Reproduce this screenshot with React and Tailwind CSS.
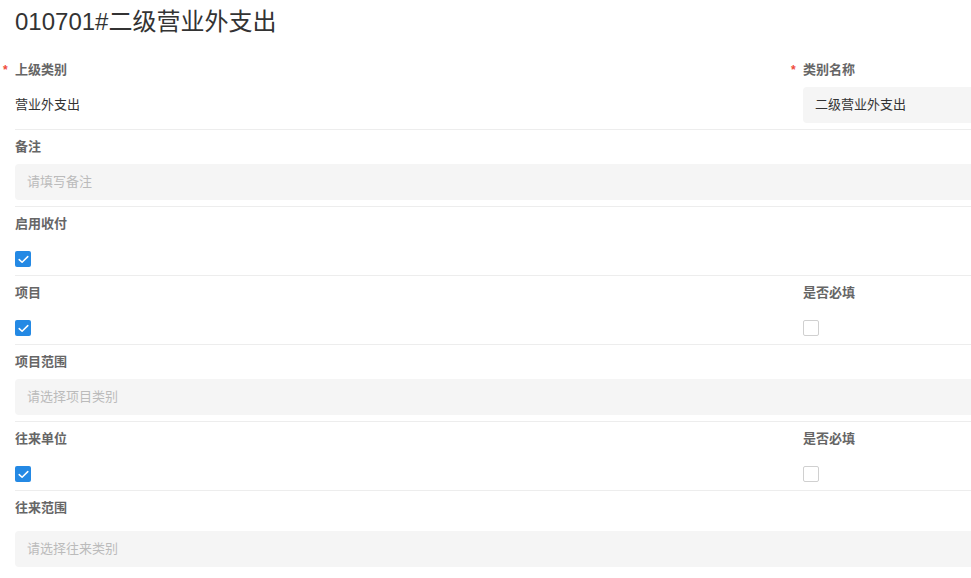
import React from 'react';

const font = { fontFamily: '"Liberation Sans", "Noto Sans CJK SC", sans-serif' };

const Label = ({ children, required }) => (
  <div className="relative h-5 mt-[7px] text-[13px] leading-5 font-bold text-[#666]">
    {required && (
      <span className="absolute -left-[12px] top-0 text-[12px] text-[#f04b3c]">*</span>
    )}
    {children}
  </div>
);

const Input = ({ value, placeholder, className = '' }) => (
  <div className={`h-9 mt-[7px] rounded-[4px] bg-[#f5f5f5] pl-3 flex items-center text-[13px] ${className}`}>
    {value ? <span className="text-[#333]">{value}</span> : <span className="text-[#bbb]">{placeholder}</span>}
  </div>
);

const Check = ({ checked }) => (
  <div className="mt-[17px] mb-[8px] h-4">
    {checked ? (
      <span className="w-4 h-4 rounded-[2px] bg-[#2489e4] flex items-center justify-center">
        <svg width="11" height="9" viewBox="0 0 11 9" fill="none">
          <path d="M1.2 4.6 L4.1 7.3 L9.8 1.6" stroke="white" strokeWidth="1.5" strokeLinecap="round" strokeLinejoin="round" />
        </svg>
      </span>
    ) : (
      <span className="block w-4 h-4 rounded-[2px] border border-[#d0d0d0] bg-white" />
    )}
  </div>
);

const Row = ({ children, cols = 1 }) => (
  <div className={`border-b border-[#ededed] ${cols === 2 ? 'grid grid-cols-2' : ''}`}>{children}</div>
);

export default function App() {
  return (
    <div className="w-full overflow-hidden bg-white min-h-[578px]" style={font}>
      <div className="w-[1606px] px-[15px]">
        <h1 className="pt-[6px] mb-[15px] text-[24px] leading-8 text-[#333] font-normal">010701#二级营业外支出</h1>

        {/* 上级类别 / 类别名称 */}
        <Row cols={2}>
          <div>
            <Label required>上级类别</Label>
            <div className="h-9 mt-[7px] mb-[6px] flex items-center text-[13px] text-[#333]">营业外支出</div>
          </div>
          <div>
            <Label required>类别名称</Label>
            <Input value="二级营业外支出" className="mb-[6px]" />
          </div>
        </Row>

        <Row>
          <Label>备注</Label>
          <Input placeholder="请填写备注" className="mb-[6px]" />
        </Row>

        <Row>
          <Label>启用收付</Label>
          <Check checked />
        </Row>

        <Row cols={2}>
          <div>
            <Label>项目</Label>
            <Check checked />
          </div>
          <div>
            <Label>是否必填</Label>
            <Check />
          </div>
        </Row>

        <Row>
          <Label>项目范围</Label>
          <Input placeholder="请选择项目类别" className="mb-[6px]" />
        </Row>

        <Row cols={2}>
          <div>
            <Label>往来单位</Label>
            <Check checked />
          </div>
          <div>
            <Label>是否必填</Label>
            <Check />
          </div>
        </Row>

        <div>
          <Label>往来范围</Label>
          <Input placeholder="请选择往来类别" className="!mt-[13px] mb-[6px]" />
        </div>
      </div>
    </div>
  );
}
